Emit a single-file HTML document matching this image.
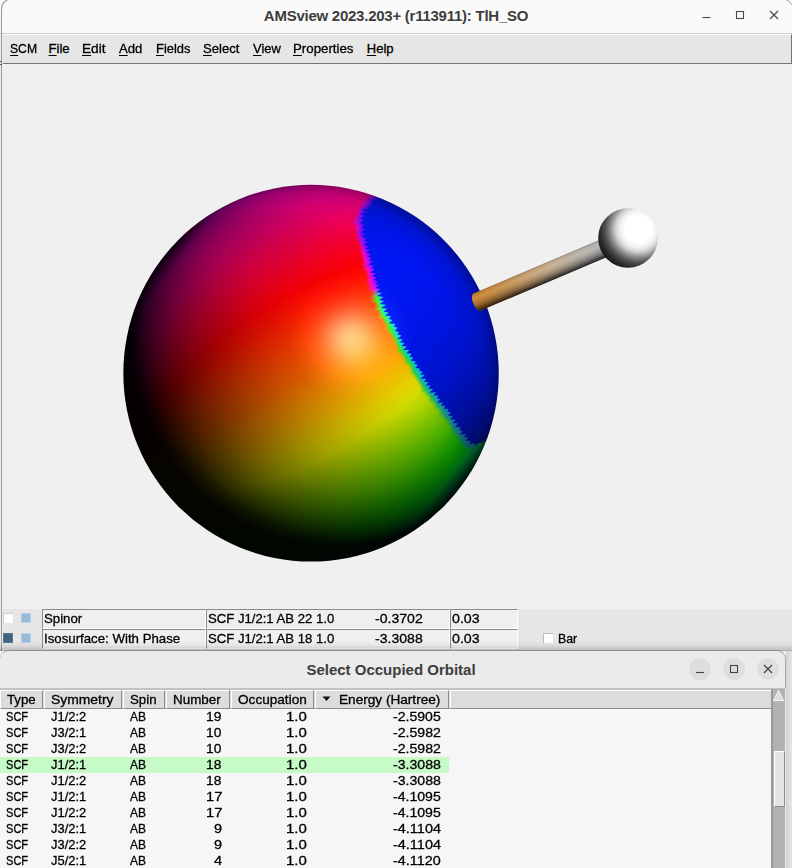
<!DOCTYPE html>
<html>
<head>
<meta charset="utf-8">
<title>AMSview</title>
<style>
html,body{margin:0;padding:0;}
body{width:792px;height:868px;overflow:hidden;position:relative;background:#f0f0f0;font-family:"Liberation Sans",sans-serif;color:#000;}
.abs{position:absolute;}
.t{position:absolute;-webkit-text-stroke:0.3px #000;transform-origin:0 0;white-space:nowrap;line-height:16px;height:16px;font-size:13px;color:#000;}
.r{text-align:right;}
/* main window */
#win{left:0;top:0;width:792px;height:651px;background:#f0f0f0;}
#titlebar{left:0;top:0;width:792px;height:33px;background:#fafafa;border-bottom:1px solid #cfcfcf;}
#title{left:0;top:6px;width:792px;text-align:center;font-weight:bold;font-size:15px;line-height:20px;color:#3d3d3d;letter-spacing:-0.25px;}
#menubar{left:3px;top:34px;width:789px;height:30px;background:#e6e6e6;border-top:1px solid #fbfbfb;border-bottom:1px solid #747474;border-right:1px solid #747474;box-sizing:border-box;}
.m{position:absolute;-webkit-text-stroke:0.3px #000;transform-origin:0 0;top:41px;font-size:13px;line-height:16px;color:#000;white-space:nowrap;}
.m u{text-decoration:underline;text-underline-offset:1.5px;text-decoration-thickness:1px;}
#panel{left:3px;top:609px;width:789px;height:40px;background:#e6e6e6;}
.entry{position:absolute;height:18px;background:#efefef;border-top:1px solid #8a8a8a;border-left:1px solid #8a8a8a;border-bottom:1px solid #fff;border-right:1px solid #fff;box-sizing:content-box;}
.cb{position:absolute;width:9px;height:9px;}
/* dialog */
#dlgsh{left:0;top:641px;width:792px;height:10px;background:linear-gradient(180deg,rgba(0,0,0,0),rgba(0,0,0,0.04) 40%,rgba(0,0,0,0.12) 75%,rgba(0,0,0,0.3));}
#dlg{left:0;top:650px;width:786px;height:218px;background:#ebebeb;border-top-left-radius:9px;border-top-right-radius:9px;border-top:1px solid #8e8e8e;border-right:1px solid #a8a8a8;box-sizing:border-box;}
#dtitle{left:0;top:660px;width:782px;text-align:center;font-weight:bold;font-size:15px;line-height:20px;color:#3d3d3d;}
.wb{position:absolute;width:22px;height:22px;border-radius:11px;background:#dedede;top:658px;}
.hc{position:absolute;top:690px;height:17px;background:#dcdcdc;border-top:1px solid #fff;border-left:1px solid #fff;border-right:1px solid #8c8c8c;border-bottom:1px solid #8c8c8c;box-sizing:content-box;}
</style>
</head>
<body>
<div id="win" class="abs"></div>
<div id="titlebar" class="abs"></div>
<div id="title" class="abs">AMSview 2023.203+ (r113911): TlH_SO</div>
<div id="menubar" class="abs"></div>
<svg class="abs" style="left:692px;top:0" width="100" height="33" viewBox="0 0 100 33">
<path d="M10.5 17.5h8" stroke="#4a4a4a" stroke-width="1.1" fill="none"/>
<rect x="44.5" y="11.5" width="7" height="7" stroke="#4a4a4a" stroke-width="1.1" fill="none"/>
<path d="M78 11l8 8M86 11l-8 8" stroke="#4a4a4a" stroke-width="1.2" fill="none"/>
</svg>
<svg class="abs" style="left:0;top:0" width="792" height="652" viewBox="0 0 792 652"><path d="M1.5 651V9Q1.8 2.2 7.5 0" stroke="#9c9c9c" stroke-width="1.1" fill="none"/><path d="M786.5 0Q790.6 1 791.5 5" stroke="#a8a8a8" stroke-width="1" fill="none"/><path d="M0 61.5H2M0 64.5H2" stroke="#555" stroke-width="1" fill="none"/></svg>
<div class="m" style="left:9.7px;transform:scaleX(0.936);"><u>S</u>CM</div>
<div class="m" style="left:48.6px;"><u>F</u>ile</div>
<div class="m" style="left:81.8px;transform:scaleX(1.052);"><u>E</u>dit</div>
<div class="m" style="left:118.9px;transform:scaleX(1.009);"><u>A</u>dd</div>
<div class="m" style="left:155.6px;transform:scaleX(0.992);"><u>F</u>ields</div>
<div class="m" style="left:202.6px;transform:scaleX(1.008);"><u>S</u>elect</div>
<div class="m" style="left:252.7px;transform:scaleX(0.995);"><u>V</u>iew</div>
<div class="m" style="left:293.4px;transform:scaleX(1.021);"><u>P</u>roperties</div>
<div class="m" style="left:366.8px;"><u>H</u>elp</div>
<svg class="abs" style="left:0;top:64px" width="792" height="545" viewBox="0 64 792 545">
<defs>
<clipPath id="sph"><ellipse cx="311.05" cy="373.2" rx="187.70000000000002" ry="188.4"/></clipPath>
<linearGradient id="hg" x1="0" y1="0" x2="0" y2="1"><stop offset="0.100" stop-color="#ff00e4"/><stop offset="0.133" stop-color="#ff00a5"/><stop offset="0.167" stop-color="#ff008a"/><stop offset="0.200" stop-color="#ff0070"/><stop offset="0.233" stop-color="#ff0052"/><stop offset="0.267" stop-color="#ff0036"/><stop offset="0.300" stop-color="#ff001d"/><stop offset="0.333" stop-color="#ff0005"/><stop offset="0.367" stop-color="#ff1300"/><stop offset="0.400" stop-color="#ff2900"/><stop offset="0.433" stop-color="#ff3f00"/><stop offset="0.467" stop-color="#ff5500"/><stop offset="0.500" stop-color="#ff6a00"/><stop offset="0.533" stop-color="#ff8900"/><stop offset="0.567" stop-color="#ffa700"/><stop offset="0.600" stop-color="#ffc600"/><stop offset="0.633" stop-color="#ffe500"/><stop offset="0.667" stop-color="#f7ff00"/><stop offset="0.700" stop-color="#d3ff00"/><stop offset="0.733" stop-color="#acff00"/><stop offset="0.767" stop-color="#83ff00"/><stop offset="0.800" stop-color="#55ff00"/><stop offset="0.833" stop-color="#20ff00"/><stop offset="0.867" stop-color="#00ff11"/><stop offset="0.900" stop-color="#00ff7c"/></linearGradient>
<linearGradient id="lg" x1="0" y1="0" x2="1" y2="0"><stop offset="0.000" stop-color="#000000"/><stop offset="0.036" stop-color="#000000"/><stop offset="0.071" stop-color="#000000"/><stop offset="0.107" stop-color="#131313"/><stop offset="0.143" stop-color="#303030"/><stop offset="0.179" stop-color="#4a4a4a"/><stop offset="0.214" stop-color="#616161"/><stop offset="0.250" stop-color="#767676"/><stop offset="0.286" stop-color="#898989"/><stop offset="0.321" stop-color="#9b9b9b"/><stop offset="0.357" stop-color="#ababab"/><stop offset="0.393" stop-color="#bababa"/><stop offset="0.429" stop-color="#c8c8c8"/><stop offset="0.464" stop-color="#d4d4d4"/><stop offset="0.500" stop-color="#e0e0e0"/><stop offset="0.536" stop-color="#eaeaea"/><stop offset="0.571" stop-color="#f3f3f3"/><stop offset="0.607" stop-color="#fbfbfb"/><stop offset="0.643" stop-color="#ffffff"/><stop offset="0.679" stop-color="#ffffff"/><stop offset="0.714" stop-color="#ffffff"/><stop offset="0.750" stop-color="#ffffff"/><stop offset="0.786" stop-color="#ffffff"/><stop offset="0.821" stop-color="#ffffff"/><stop offset="0.857" stop-color="#ffffff"/><stop offset="0.893" stop-color="#ffffff"/><stop offset="0.929" stop-color="#f5f5f5"/><stop offset="0.964" stop-color="#e0e0e0"/><stop offset="1.000" stop-color="#989898"/></linearGradient>
<linearGradient id="cg" gradientUnits="userSpaceOnUse" x1="0" y1="-188.4" x2="0" y2="188.4"><stop offset="0.000" stop-color="#000" stop-opacity="1.000"/><stop offset="0.042" stop-color="#000" stop-opacity="0.600"/><stop offset="0.083" stop-color="#000" stop-opacity="0.447"/><stop offset="0.125" stop-color="#000" stop-opacity="0.339"/><stop offset="0.167" stop-color="#000" stop-opacity="0.255"/><stop offset="0.208" stop-color="#000" stop-opacity="0.188"/><stop offset="0.250" stop-color="#000" stop-opacity="0.134"/><stop offset="0.292" stop-color="#000" stop-opacity="0.091"/><stop offset="0.333" stop-color="#000" stop-opacity="0.057"/><stop offset="0.375" stop-color="#000" stop-opacity="0.032"/><stop offset="0.417" stop-color="#000" stop-opacity="0.014"/><stop offset="0.458" stop-color="#000" stop-opacity="0.003"/><stop offset="0.500" stop-color="#000" stop-opacity="0.000"/><stop offset="0.542" stop-color="#000" stop-opacity="0.003"/><stop offset="0.583" stop-color="#000" stop-opacity="0.014"/><stop offset="0.625" stop-color="#000" stop-opacity="0.032"/><stop offset="0.667" stop-color="#000" stop-opacity="0.057"/><stop offset="0.708" stop-color="#000" stop-opacity="0.091"/><stop offset="0.750" stop-color="#000" stop-opacity="0.134"/><stop offset="0.792" stop-color="#000" stop-opacity="0.188"/><stop offset="0.833" stop-color="#000" stop-opacity="0.255"/><stop offset="0.875" stop-color="#000" stop-opacity="0.339"/><stop offset="0.917" stop-color="#000" stop-opacity="0.447"/><stop offset="0.958" stop-color="#000" stop-opacity="0.600"/><stop offset="1.000" stop-color="#000" stop-opacity="1.000"/></linearGradient>
<radialGradient id="sp" gradientUnits="userSpaceOnUse" cx="350.5" cy="337.5" r="62.0">
<stop offset="0.000" stop-color="#ffd8fa" stop-opacity="0.520"/>
<stop offset="0.062" stop-color="#ffd8fa" stop-opacity="0.511"/>
<stop offset="0.125" stop-color="#ffd8fa" stop-opacity="0.485"/>
<stop offset="0.188" stop-color="#ffd8fa" stop-opacity="0.444"/>
<stop offset="0.250" stop-color="#ffd8fa" stop-opacity="0.393"/>
<stop offset="0.312" stop-color="#ffd8fa" stop-opacity="0.335"/>
<stop offset="0.375" stop-color="#ffd8fa" stop-opacity="0.276"/>
<stop offset="0.438" stop-color="#ffd8fa" stop-opacity="0.219"/>
<stop offset="0.500" stop-color="#ffd8fa" stop-opacity="0.168"/>
<stop offset="0.562" stop-color="#ffd8fa" stop-opacity="0.124"/>
<stop offset="0.625" stop-color="#ffd8fa" stop-opacity="0.089"/>
<stop offset="0.688" stop-color="#ffd8fa" stop-opacity="0.061"/>
<stop offset="0.750" stop-color="#ffd8fa" stop-opacity="0.040"/>
<stop offset="0.812" stop-color="#ffd8fa" stop-opacity="0.026"/>
<stop offset="0.875" stop-color="#ffd8fa" stop-opacity="0.016"/>
<stop offset="0.938" stop-color="#ffd8fa" stop-opacity="0.009"/>
<stop offset="1.000" stop-color="#ffd8fa" stop-opacity="0.000"/>
</radialGradient>
<linearGradient id="fr" gradientUnits="userSpaceOnUse" x1="370" y1="200" x2="470" y2="440"><stop offset="0" stop-color="#b010e0"/><stop offset="0.2" stop-color="#f010e0"/><stop offset="0.325" stop-color="#ff10c0"/><stop offset="0.355" stop-color="#40f010"/><stop offset="0.6" stop-color="#20f020"/><stop offset="0.8" stop-color="#20e070"/><stop offset="1" stop-color="#20c0c0"/></linearGradient>
<linearGradient id="fr2" gradientUnits="userSpaceOnUse" x1="370" y1="200" x2="470" y2="440"><stop offset="0" stop-color="#5010ff"/><stop offset="0.2" stop-color="#8010ff"/><stop offset="0.325" stop-color="#b010ff"/><stop offset="0.355" stop-color="#10e0c0"/><stop offset="0.7" stop-color="#10d0e0"/><stop offset="1" stop-color="#20a0f0"/></linearGradient>
<linearGradient id="bl" gradientUnits="userSpaceOnUse" x1="477" y1="0" x2="606" y2="0"><stop offset="0" stop-color="#c98432"/><stop offset="0.3" stop-color="#c8965a"/><stop offset="0.6" stop-color="#c9ae8e"/><stop offset="0.85" stop-color="#bcb4aa"/><stop offset="1" stop-color="#b8b6b4"/></linearGradient>
<linearGradient id="bs" x1="0" y1="0" x2="0" y2="1"><stop offset="0" stop-color="#000" stop-opacity="0.22"/><stop offset="0.1" stop-color="#000" stop-opacity="0.04"/><stop offset="0.25" stop-color="#fff" stop-opacity="0.06"/><stop offset="0.45" stop-color="#000" stop-opacity="0.05"/><stop offset="0.7" stop-color="#000" stop-opacity="0.3"/><stop offset="0.88" stop-color="#000" stop-opacity="0.6"/><stop offset="1" stop-color="#000" stop-opacity="0.82"/></linearGradient>
<radialGradient id="hs" gradientUnits="userSpaceOnUse" cx="638.5" cy="229" r="44"><stop offset="0" stop-color="#fff"/><stop offset="0.30" stop-color="#fff"/><stop offset="0.42" stop-color="#f0f0f0"/><stop offset="0.52" stop-color="#d0d0d0"/><stop offset="0.64" stop-color="#8c8c8c"/><stop offset="0.76" stop-color="#505050"/><stop offset="0.88" stop-color="#2a2a2a"/><stop offset="1" stop-color="#161616"/></radialGradient>
</defs>
<g clip-path="url(#sph)">
<g transform="translate(311.05 373.2) rotate(-24.3) skewY(-5.7)">
<g fill="url(#hg)"><rect x="-190" y="-23.1" width="4" height="46.2"/><rect x="-188" y="-41.3" width="4" height="82.7"/><rect x="-186" y="-53.6" width="4" height="107.2"/><rect x="-184" y="-63.4" width="4" height="126.8"/><rect x="-182" y="-71.8" width="4" height="143.6"/><rect x="-180" y="-79.3" width="4" height="158.5"/><rect x="-178" y="-86.0" width="4" height="172.0"/><rect x="-176" y="-92.2" width="4" height="184.3"/><rect x="-174" y="-97.9" width="4" height="195.8"/><rect x="-172" y="-103.2" width="4" height="206.5"/><rect x="-170" y="-108.3" width="4" height="216.5"/><rect x="-168" y="-113.0" width="4" height="226.0"/><rect x="-166" y="-117.5" width="4" height="235.0"/><rect x="-164" y="-121.8" width="4" height="243.6"/><rect x="-162" y="-125.9" width="4" height="251.8"/><rect x="-160" y="-129.8" width="4" height="259.6"/><rect x="-158" y="-133.5" width="4" height="267.1"/><rect x="-156" y="-137.1" width="4" height="274.3"/><rect x="-154" y="-140.6" width="4" height="281.2"/><rect x="-152" y="-143.9" width="4" height="287.9"/><rect x="-150" y="-147.2" width="4" height="294.3"/><rect x="-148" y="-150.3" width="4" height="300.6"/><rect x="-146" y="-153.3" width="4" height="306.6"/><rect x="-144" y="-156.2" width="4" height="312.4"/><rect x="-142" y="-159.0" width="4" height="318.0"/><rect x="-140" y="-161.7" width="4" height="323.5"/><rect x="-138" y="-164.4" width="4" height="328.8"/><rect x="-136" y="-166.9" width="4" height="333.9"/><rect x="-134" y="-169.4" width="4" height="338.9"/><rect x="-132" y="-171.9" width="4" height="343.7"/><rect x="-130" y="-174.2" width="4" height="348.4"/><rect x="-128" y="-176.5" width="4" height="353.0"/><rect x="-126" y="-178.7" width="4" height="357.4"/><rect x="-124" y="-180.9" width="4" height="361.7"/><rect x="-122" y="-182.9" width="4" height="365.9"/><rect x="-120" y="-185.0" width="4" height="370.0"/><rect x="-118" y="-187.0" width="4" height="373.9"/><rect x="-116" y="-188.9" width="4" height="377.8"/><rect x="-114" y="-190.8" width="4" height="381.6"/><rect x="-112" y="-192.6" width="4" height="385.2"/><rect x="-110" y="-194.4" width="4" height="388.8"/><rect x="-108" y="-196.1" width="4" height="392.2"/><rect x="-106" y="-197.8" width="4" height="395.6"/><rect x="-104" y="-199.4" width="4" height="398.8"/><rect x="-102" y="-201.0" width="4" height="402.0"/><rect x="-100" y="-202.6" width="4" height="405.1"/><rect x="-98" y="-204.1" width="4" height="408.1"/><rect x="-96" y="-205.5" width="4" height="411.1"/><rect x="-94" y="-207.0" width="4" height="413.9"/><rect x="-92" y="-208.3" width="4" height="416.7"/><rect x="-90" y="-209.7" width="4" height="419.4"/><rect x="-88" y="-211.0" width="4" height="422.0"/><rect x="-86" y="-212.3" width="4" height="424.5"/><rect x="-84" y="-213.5" width="4" height="427.0"/><rect x="-82" y="-214.7" width="4" height="429.4"/><rect x="-80" y="-215.9" width="4" height="431.7"/><rect x="-78" y="-217.0" width="4" height="434.0"/><rect x="-76" y="-218.1" width="4" height="436.2"/><rect x="-74" y="-219.1" width="4" height="438.3"/><rect x="-72" y="-220.2" width="4" height="440.3"/><rect x="-70" y="-221.2" width="4" height="442.3"/><rect x="-68" y="-222.1" width="4" height="444.2"/><rect x="-66" y="-223.0" width="4" height="446.1"/><rect x="-64" y="-223.9" width="4" height="447.9"/><rect x="-62" y="-224.8" width="4" height="449.6"/><rect x="-60" y="-225.6" width="4" height="451.3"/><rect x="-58" y="-226.4" width="4" height="452.9"/><rect x="-56" y="-227.2" width="4" height="454.4"/><rect x="-54" y="-227.9" width="4" height="455.9"/><rect x="-52" y="-228.7" width="4" height="457.3"/><rect x="-50" y="-229.3" width="4" height="458.7"/><rect x="-48" y="-230.0" width="4" height="460.0"/><rect x="-46" y="-230.6" width="4" height="461.2"/><rect x="-44" y="-231.2" width="4" height="462.4"/><rect x="-42" y="-231.8" width="4" height="463.6"/><rect x="-40" y="-232.3" width="4" height="464.6"/><rect x="-38" y="-232.8" width="4" height="465.7"/><rect x="-36" y="-233.3" width="4" height="466.6"/><rect x="-34" y="-233.8" width="4" height="467.5"/><rect x="-32" y="-234.2" width="4" height="468.4"/><rect x="-30" y="-234.6" width="4" height="469.2"/><rect x="-28" y="-235.0" width="4" height="469.9"/><rect x="-26" y="-235.3" width="4" height="470.6"/><rect x="-24" y="-235.6" width="4" height="471.3"/><rect x="-22" y="-235.9" width="4" height="471.8"/><rect x="-20" y="-236.2" width="4" height="472.4"/><rect x="-18" y="-236.4" width="4" height="472.8"/><rect x="-16" y="-236.6" width="4" height="473.3"/><rect x="-14" y="-236.8" width="4" height="473.6"/><rect x="-12" y="-237.0" width="4" height="474.0"/><rect x="-10" y="-237.1" width="4" height="474.2"/><rect x="-8" y="-237.2" width="4" height="474.4"/><rect x="-6" y="-237.3" width="4" height="474.6"/><rect x="-4" y="-237.3" width="4" height="474.7"/><rect x="-2" y="-237.4" width="4" height="474.7"/><rect x="0" y="-237.4" width="4" height="474.7"/><rect x="2" y="-237.3" width="4" height="474.7"/><rect x="4" y="-237.3" width="4" height="474.6"/><rect x="6" y="-237.2" width="4" height="474.4"/><rect x="8" y="-237.1" width="4" height="474.2"/><rect x="10" y="-237.0" width="4" height="474.0"/><rect x="12" y="-236.8" width="4" height="473.6"/><rect x="14" y="-236.6" width="4" height="473.3"/><rect x="16" y="-236.4" width="4" height="472.8"/><rect x="18" y="-236.2" width="4" height="472.4"/><rect x="20" y="-235.9" width="4" height="471.8"/><rect x="22" y="-235.6" width="4" height="471.3"/><rect x="24" y="-235.3" width="4" height="470.6"/><rect x="26" y="-235.0" width="4" height="469.9"/><rect x="28" y="-234.6" width="4" height="469.2"/><rect x="30" y="-234.2" width="4" height="468.4"/><rect x="32" y="-233.8" width="4" height="467.5"/><rect x="34" y="-233.3" width="4" height="466.6"/><rect x="36" y="-232.8" width="4" height="465.7"/><rect x="38" y="-232.3" width="4" height="464.6"/><rect x="40" y="-231.8" width="4" height="463.6"/><rect x="42" y="-231.2" width="4" height="462.4"/><rect x="44" y="-230.6" width="4" height="461.2"/><rect x="46" y="-230.0" width="4" height="460.0"/><rect x="48" y="-229.3" width="4" height="458.7"/><rect x="50" y="-228.7" width="4" height="457.3"/><rect x="52" y="-227.9" width="4" height="455.9"/><rect x="54" y="-227.2" width="4" height="454.4"/><rect x="56" y="-226.4" width="4" height="452.9"/><rect x="58" y="-225.6" width="4" height="451.3"/><rect x="60" y="-224.8" width="4" height="449.6"/><rect x="62" y="-223.9" width="4" height="447.9"/><rect x="64" y="-223.0" width="4" height="446.1"/><rect x="66" y="-222.1" width="4" height="444.2"/><rect x="68" y="-221.2" width="4" height="442.3"/><rect x="70" y="-220.2" width="4" height="440.3"/><rect x="72" y="-219.1" width="4" height="438.3"/><rect x="74" y="-218.1" width="4" height="436.2"/><rect x="76" y="-217.0" width="4" height="434.0"/><rect x="78" y="-215.9" width="4" height="431.7"/><rect x="80" y="-214.7" width="4" height="429.4"/><rect x="82" y="-213.5" width="4" height="427.0"/><rect x="84" y="-212.3" width="4" height="424.5"/><rect x="86" y="-211.0" width="4" height="422.0"/><rect x="88" y="-209.7" width="4" height="419.4"/><rect x="90" y="-208.3" width="4" height="416.7"/><rect x="92" y="-207.0" width="4" height="413.9"/><rect x="94" y="-205.5" width="4" height="411.1"/><rect x="96" y="-204.1" width="4" height="408.1"/><rect x="98" y="-202.6" width="4" height="405.1"/><rect x="100" y="-201.0" width="4" height="402.0"/><rect x="102" y="-199.4" width="4" height="398.8"/><rect x="104" y="-197.8" width="4" height="395.6"/><rect x="106" y="-196.1" width="4" height="392.2"/><rect x="108" y="-194.4" width="4" height="388.8"/><rect x="110" y="-192.6" width="4" height="385.2"/><rect x="112" y="-190.8" width="4" height="381.6"/><rect x="114" y="-188.9" width="4" height="377.8"/><rect x="116" y="-187.0" width="4" height="373.9"/><rect x="118" y="-185.0" width="4" height="370.0"/><rect x="120" y="-182.9" width="4" height="365.9"/><rect x="122" y="-180.9" width="4" height="361.7"/><rect x="124" y="-178.7" width="4" height="357.4"/><rect x="126" y="-176.5" width="4" height="353.0"/><rect x="128" y="-174.2" width="4" height="348.4"/><rect x="130" y="-171.9" width="4" height="343.7"/><rect x="132" y="-169.4" width="4" height="338.9"/><rect x="134" y="-166.9" width="4" height="333.9"/><rect x="136" y="-164.4" width="4" height="328.8"/><rect x="138" y="-161.7" width="4" height="323.5"/><rect x="140" y="-159.0" width="4" height="318.0"/><rect x="142" y="-156.2" width="4" height="312.4"/><rect x="144" y="-153.3" width="4" height="306.6"/><rect x="146" y="-150.3" width="4" height="300.6"/><rect x="148" y="-147.2" width="4" height="294.3"/><rect x="150" y="-143.9" width="4" height="287.9"/><rect x="152" y="-140.6" width="4" height="281.2"/><rect x="154" y="-137.1" width="4" height="274.3"/><rect x="156" y="-133.5" width="4" height="267.1"/><rect x="158" y="-129.8" width="4" height="259.6"/><rect x="160" y="-125.9" width="4" height="251.8"/><rect x="162" y="-121.8" width="4" height="243.6"/><rect x="164" y="-117.5" width="4" height="235.0"/><rect x="166" y="-113.0" width="4" height="226.0"/><rect x="168" y="-108.3" width="4" height="216.5"/><rect x="170" y="-103.2" width="4" height="206.5"/><rect x="172" y="-97.9" width="4" height="195.8"/><rect x="174" y="-92.2" width="4" height="184.3"/><rect x="176" y="-86.0" width="4" height="172.0"/><rect x="178" y="-79.3" width="4" height="158.5"/><rect x="180" y="-71.8" width="4" height="143.6"/><rect x="182" y="-63.4" width="4" height="126.8"/><rect x="184" y="-53.6" width="4" height="107.2"/><rect x="186" y="-41.3" width="4" height="82.7"/><rect x="188" y="-23.1" width="4" height="46.2"/></g>
</g>
<filter id="fb" x="-5%" y="-5%" width="110%" height="110%"><feGaussianBlur stdDeviation="1.1"/></filter>
<path d="M374.8 191.5 L375.8 194.7 L370.0 193.3 L372.2 197.2 L367.2 196.9 L368.3 200.2 L364.5 200.8 L365.4 203.6 L360.4 203.6 L363.2 206.8 L359.3 207.9 L359.8 210.5 L357.1 212.7 L359.2 215.7 L354.0 217.3 L357.5 220.3 L351.9 222.7 L358.2 225.3 L353.8 228.2 L358.5 230.1 L356.1 232.7 L358.6 234.8 L355.8 237.5 L359.8 239.2 L358.1 241.7 L361.1 243.4 L359.8 245.7 L362.4 247.3 L359.3 249.8 L363.7 251.1 L360.0 253.7 L364.5 255.1 L361.1 257.6 L365.5 259.0 L362.2 261.5 L366.1 262.9 L361.3 265.6 L367.8 266.7 L362.8 269.4 L368.5 270.6 L365.6 273.1 L369.0 274.6 L366.7 277.0 L369.8 278.5 L366.0 281.1 L371.1 282.4 L366.7 285.1 L372.1 286.4 L367.4 289.4 L373.8 290.4 L372.1 292.9 L374.6 294.5 L370.4 297.5 L376.2 298.4 L371.5 301.4 L377.5 302.3 L376.0 304.7 L379.1 306.2 L375.0 309.3 L380.2 310.4 L379.2 313.0 L382.3 314.4 L378.4 317.8 L384.7 318.0 L383.1 320.7 L386.2 321.9 L385.3 324.5 L388.2 326.0 L385.2 329.3 L390.5 330.0 L388.1 333.0 L392.9 333.8 L391.3 336.4 L395.0 337.4 L393.4 340.0 L396.8 341.1 L395.3 343.6 L398.5 344.8 L396.9 347.4 L400.3 348.6 L396.4 352.1 L402.9 352.2 L401.0 355.2 L405.3 355.9 L403.5 358.8 L407.1 359.7 L403.7 363.1 L409.6 363.3 L408.4 366.0 L412.2 366.9 L410.3 369.7 L413.7 370.6 L410.5 373.7 L415.8 374.0 L414.1 376.7 L417.6 377.6 L416.9 379.9 L420.2 380.9 L418.4 383.5 L422.3 384.3 L420.2 387.3 L424.3 388.0 L420.8 391.7 L427.0 391.5 L424.7 394.7 L429.8 394.7 L428.4 397.5 L431.8 398.3 L428.7 401.8 L434.9 401.5 L433.3 404.3 L436.9 405.0 L434.2 408.3 L440.0 408.1 L438.4 411.0 L442.5 411.5 L438.8 415.2 L444.7 415.0 L442.7 417.9 L446.7 418.4 L446.2 420.9 L449.8 421.8 L447.9 424.8 L451.9 425.7 L450.2 428.6 L454.4 429.4 L451.6 432.9 L456.4 433.6 L455.7 436.2 L459.7 436.9 L458.9 439.5 L462.0 440.3 L460.1 443.4 L465.7 443.9 L464.6 448.3 L470.3 446.7 L470.9 450.1 L475.5 447.4 L477.3 438.4 L479.8 439.8 L478.6 437.1 L481.4 438.3 L481.4 436.2 L484.8 436.6 L520 470 L540 150 L385 150 Z" fill="url(#fr)" filter="url(#fb)"/>
<path d="M377.4 193.2 L378.7 196.5 L372.6 195.0 L374.8 198.9 L369.3 198.1 L371.3 201.8 L366.1 201.5 L368.2 204.8 L365.4 205.7 L366.0 208.0 L360.5 208.3 L363.2 211.4 L359.2 213.1 L362.3 216.1 L357.0 217.7 L362.0 220.6 L357.6 222.8 L361.9 225.2 L359.4 227.8 L362.3 229.8 L357.2 232.6 L362.3 234.4 L358.7 237.1 L363.8 238.6 L359.0 241.5 L364.6 242.8 L361.5 245.4 L366.3 246.7 L362.2 249.4 L366.7 250.7 L365.1 253.0 L368.3 254.5 L364.7 257.1 L369.3 258.4 L366.8 260.8 L370.1 262.3 L365.5 265.0 L371.2 266.2 L369.2 268.5 L371.7 270.2 L370.1 272.4 L373.0 274.0 L370.0 276.5 L374.2 277.9 L370.9 280.4 L375.0 281.8 L370.2 284.6 L375.5 285.9 L372.3 288.5 L377.4 289.7 L373.8 292.6 L378.2 293.8 L376.1 296.3 L380.0 297.6 L377.7 300.1 L381.1 301.5 L377.8 304.3 L382.5 305.5 L380.7 308.0 L384.0 309.5 L379.8 312.8 L385.7 313.4 L383.8 316.1 L388.2 317.0 L385.0 320.1 L389.6 320.9 L388.9 323.4 L392.2 324.8 L390.0 327.8 L394.1 328.8 L392.4 331.7 L396.4 332.8 L392.9 335.9 L398.0 336.5 L396.9 338.9 L400.5 340.0 L396.1 343.4 L401.5 343.9 L399.1 346.8 L404.0 347.4 L401.6 350.4 L406.2 351.2 L402.1 354.8 L408.3 354.9 L406.2 357.8 L410.2 358.7 L408.9 361.3 L412.4 362.3 L411.6 364.8 L414.8 366.0 L411.5 369.3 L417.2 369.4 L413.7 372.7 L419.6 372.8 L415.8 376.1 L420.9 376.5 L417.5 379.7 L423.0 379.9 L420.0 383.0 L425.8 383.1 L422.5 386.4 L427.5 386.8 L426.8 389.3 L429.8 390.4 L427.6 393.5 L432.5 393.7 L430.5 396.7 L435.0 397.0 L434.2 399.6 L437.6 400.3 L435.0 403.6 L440.3 403.6 L438.5 406.6 L442.8 407.0 L440.5 410.1 L445.3 410.4 L443.3 413.4 L448.2 413.6 L444.8 417.1 L450.1 417.2 L448.6 420.0 L452.4 420.9 L450.8 423.8 L454.6 424.7 L451.9 428.0 L457.4 428.3 L455.4 431.5 L460.1 432.1 L458.4 435.1 L462.7 435.5 L459.3 439.3 L465.4 438.8 L463.0 442.1 L468.2 442.4 L466.2 447.1 L472.6 444.4 L473.6 446.7 L477.3 445.1 L478.0 439.3 L481.7 442.1 L480.6 439.0 L484.1 440.2 L482.9 437.3 L487.6 438.6 L520 470 L540 150 L385 150 Z" fill="url(#fr2)" filter="url(#fb)"/>
<path d="M380.6 195.2 L381.1 198.1 L376.6 197.6 L377.6 200.7 L372.1 199.8 L373.6 203.0 L370.8 203.8 L371.8 206.4 L367.5 206.6 L368.8 209.2 L362.5 209.0 L366.7 212.3 L361.1 213.5 L365.8 216.5 L360.8 218.1 L364.6 220.8 L359.9 222.8 L365.2 225.1 L361.0 227.6 L365.7 229.5 L361.0 232.2 L365.6 234.0 L361.6 236.7 L367.2 238.1 L364.4 240.7 L367.8 242.3 L363.5 245.1 L369.3 246.3 L365.0 248.9 L370.7 250.1 L366.0 252.8 L371.7 254.0 L368.1 256.5 L372.5 257.9 L368.9 260.5 L373.7 261.8 L368.3 264.6 L373.8 265.8 L372.0 268.1 L374.9 269.7 L370.0 272.4 L376.1 273.6 L372.2 276.2 L376.9 277.5 L373.6 280.0 L378.0 281.4 L375.2 283.8 L379.2 285.3 L375.3 288.0 L380.7 289.1 L376.4 292.0 L382.1 293.0 L377.1 296.1 L383.5 296.9 L379.1 299.9 L384.0 300.9 L379.8 303.9 L386.2 304.7 L381.0 308.0 L387.2 308.7 L383.5 311.8 L388.8 312.5 L385.1 315.7 L391.1 316.1 L388.9 318.9 L392.6 320.0 L389.0 323.4 L395.6 323.7 L393.9 326.6 L397.6 327.8 L394.9 330.9 L399.1 332.0 L397.3 334.6 L401.6 335.5 L397.2 338.9 L402.8 339.3 L400.0 342.3 L404.7 343.0 L401.5 346.0 L406.9 346.6 L402.9 350.0 L409.5 350.0 L406.5 353.3 L411.8 353.7 L409.4 356.7 L413.2 357.6 L410.7 360.7 L415.4 361.3 L414.3 363.9 L418.0 364.8 L415.2 368.0 L420.0 368.5 L419.2 370.8 L422.7 371.7 L420.3 374.6 L424.9 375.1 L420.4 378.7 L426.4 378.8 L424.0 381.7 L428.6 382.2 L425.4 385.4 L430.7 385.6 L428.1 388.8 L433.3 388.9 L429.4 392.7 L435.7 392.3 L433.6 395.4 L438.4 395.6 L436.8 398.5 L440.6 399.1 L436.9 402.8 L443.3 402.4 L440.8 405.6 L445.4 406.0 L443.8 408.8 L448.4 409.1 L447.6 411.7 L450.9 412.5 L448.0 415.8 L453.0 416.1 L450.4 419.3 L455.7 419.7 L452.6 423.1 L458.0 423.5 L454.9 426.9 L460.7 427.2 L459.6 429.9 L462.5 431.2 L460.1 434.4 L466.0 434.1 L464.2 437.1 L468.2 437.5 L465.8 440.8 L470.8 440.8 L469.8 444.2 L474.3 442.7 L475.0 444.9 L479.0 443.0 L479.8 441.9 L483.4 444.0 L482.0 440.3 L486.4 441.9 L485.2 439.0 L490.0 440.4 L520 470 L540 150 L385 150 Z" fill="#0016f2"/>
<g style="mix-blend-mode:multiply;isolation:isolate"><g transform="translate(311.05 373.2) rotate(-51.44)">
<g fill="url(#lg)"><rect y="-190" x="-18.5" height="4" width="36.9"/><rect y="-188" x="-33.1" height="4" width="66.1"/><rect y="-186" x="-42.9" height="4" width="85.7"/><rect y="-184" x="-50.7" height="4" width="101.4"/><rect y="-182" x="-57.5" height="4" width="114.9"/><rect y="-180" x="-63.4" height="4" width="126.8"/><rect y="-178" x="-68.8" height="4" width="137.6"/><rect y="-176" x="-73.7" height="4" width="147.5"/><rect y="-174" x="-78.3" height="4" width="156.6"/><rect y="-172" x="-82.6" height="4" width="165.2"/><rect y="-170" x="-86.6" height="4" width="173.2"/><rect y="-168" x="-90.4" height="4" width="180.8"/><rect y="-166" x="-94.0" height="4" width="188.0"/><rect y="-164" x="-97.4" height="4" width="194.9"/><rect y="-162" x="-100.7" height="4" width="201.4"/><rect y="-160" x="-103.8" height="4" width="207.7"/><rect y="-158" x="-106.8" height="4" width="213.7"/><rect y="-156" x="-109.7" height="4" width="219.4"/><rect y="-154" x="-112.5" height="4" width="225.0"/><rect y="-152" x="-115.2" height="4" width="230.3"/><rect y="-150" x="-117.7" height="4" width="235.5"/><rect y="-148" x="-120.2" height="4" width="240.4"/><rect y="-146" x="-122.6" height="4" width="245.3"/><rect y="-144" x="-125.0" height="4" width="249.9"/><rect y="-142" x="-127.2" height="4" width="254.4"/><rect y="-140" x="-129.4" height="4" width="258.8"/><rect y="-138" x="-131.5" height="4" width="263.0"/><rect y="-136" x="-133.6" height="4" width="267.1"/><rect y="-134" x="-135.5" height="4" width="271.1"/><rect y="-132" x="-137.5" height="4" width="275.0"/><rect y="-130" x="-139.4" height="4" width="278.7"/><rect y="-128" x="-141.2" height="4" width="282.4"/><rect y="-126" x="-143.0" height="4" width="285.9"/><rect y="-124" x="-144.7" height="4" width="289.4"/><rect y="-122" x="-146.4" height="4" width="292.7"/><rect y="-120" x="-148.0" height="4" width="296.0"/><rect y="-118" x="-149.6" height="4" width="299.2"/><rect y="-116" x="-151.1" height="4" width="302.2"/><rect y="-114" x="-152.6" height="4" width="305.2"/><rect y="-112" x="-154.1" height="4" width="308.2"/><rect y="-110" x="-155.5" height="4" width="311.0"/><rect y="-108" x="-156.9" height="4" width="313.8"/><rect y="-106" x="-158.2" height="4" width="316.5"/><rect y="-104" x="-159.5" height="4" width="319.1"/><rect y="-102" x="-160.8" height="4" width="321.6"/><rect y="-100" x="-162.1" height="4" width="324.1"/><rect y="-98" x="-163.3" height="4" width="326.5"/><rect y="-96" x="-164.4" height="4" width="328.9"/><rect y="-94" x="-165.6" height="4" width="331.1"/><rect y="-92" x="-166.7" height="4" width="333.4"/><rect y="-90" x="-167.8" height="4" width="335.5"/><rect y="-88" x="-168.8" height="4" width="337.6"/><rect y="-86" x="-169.8" height="4" width="339.6"/><rect y="-84" x="-170.8" height="4" width="341.6"/><rect y="-82" x="-171.8" height="4" width="343.5"/><rect y="-80" x="-172.7" height="4" width="345.4"/><rect y="-78" x="-173.6" height="4" width="347.2"/><rect y="-76" x="-174.5" height="4" width="348.9"/><rect y="-74" x="-175.3" height="4" width="350.6"/><rect y="-72" x="-176.1" height="4" width="352.3"/><rect y="-70" x="-176.9" height="4" width="353.8"/><rect y="-68" x="-177.7" height="4" width="355.4"/><rect y="-66" x="-178.4" height="4" width="356.9"/><rect y="-64" x="-179.1" height="4" width="358.3"/><rect y="-62" x="-179.8" height="4" width="359.7"/><rect y="-60" x="-180.5" height="4" width="361.0"/><rect y="-58" x="-181.1" height="4" width="362.3"/><rect y="-56" x="-181.8" height="4" width="363.5"/><rect y="-54" x="-182.4" height="4" width="364.7"/><rect y="-52" x="-182.9" height="4" width="365.8"/><rect y="-50" x="-183.5" height="4" width="366.9"/><rect y="-48" x="-184.0" height="4" width="368.0"/><rect y="-46" x="-184.5" height="4" width="369.0"/><rect y="-44" x="-185.0" height="4" width="369.9"/><rect y="-42" x="-185.4" height="4" width="370.8"/><rect y="-40" x="-185.9" height="4" width="371.7"/><rect y="-38" x="-186.3" height="4" width="372.5"/><rect y="-36" x="-186.6" height="4" width="373.3"/><rect y="-34" x="-187.0" height="4" width="374.0"/><rect y="-32" x="-187.4" height="4" width="374.7"/><rect y="-30" x="-187.7" height="4" width="375.3"/><rect y="-28" x="-188.0" height="4" width="375.9"/><rect y="-26" x="-188.2" height="4" width="376.5"/><rect y="-24" x="-188.5" height="4" width="377.0"/><rect y="-22" x="-188.7" height="4" width="377.5"/><rect y="-20" x="-188.9" height="4" width="377.9"/><rect y="-18" x="-189.1" height="4" width="378.3"/><rect y="-16" x="-189.3" height="4" width="378.6"/><rect y="-14" x="-189.5" height="4" width="378.9"/><rect y="-12" x="-189.6" height="4" width="379.2"/><rect y="-10" x="-189.7" height="4" width="379.4"/><rect y="-8" x="-189.8" height="4" width="379.5"/><rect y="-6" x="-189.8" height="4" width="379.7"/><rect y="-4" x="-189.9" height="4" width="379.8"/><rect y="-2" x="-189.9" height="4" width="379.8"/><rect y="0" x="-189.9" height="4" width="379.8"/><rect y="2" x="-189.9" height="4" width="379.8"/><rect y="4" x="-189.8" height="4" width="379.7"/><rect y="6" x="-189.8" height="4" width="379.5"/><rect y="8" x="-189.7" height="4" width="379.4"/><rect y="10" x="-189.6" height="4" width="379.2"/><rect y="12" x="-189.5" height="4" width="378.9"/><rect y="14" x="-189.3" height="4" width="378.6"/><rect y="16" x="-189.1" height="4" width="378.3"/><rect y="18" x="-188.9" height="4" width="377.9"/><rect y="20" x="-188.7" height="4" width="377.5"/><rect y="22" x="-188.5" height="4" width="377.0"/><rect y="24" x="-188.2" height="4" width="376.5"/><rect y="26" x="-188.0" height="4" width="375.9"/><rect y="28" x="-187.7" height="4" width="375.3"/><rect y="30" x="-187.4" height="4" width="374.7"/><rect y="32" x="-187.0" height="4" width="374.0"/><rect y="34" x="-186.6" height="4" width="373.3"/><rect y="36" x="-186.3" height="4" width="372.5"/><rect y="38" x="-185.9" height="4" width="371.7"/><rect y="40" x="-185.4" height="4" width="370.8"/><rect y="42" x="-185.0" height="4" width="369.9"/><rect y="44" x="-184.5" height="4" width="369.0"/><rect y="46" x="-184.0" height="4" width="368.0"/><rect y="48" x="-183.5" height="4" width="366.9"/><rect y="50" x="-182.9" height="4" width="365.8"/><rect y="52" x="-182.4" height="4" width="364.7"/><rect y="54" x="-181.8" height="4" width="363.5"/><rect y="56" x="-181.1" height="4" width="362.3"/><rect y="58" x="-180.5" height="4" width="361.0"/><rect y="60" x="-179.8" height="4" width="359.7"/><rect y="62" x="-179.1" height="4" width="358.3"/><rect y="64" x="-178.4" height="4" width="356.9"/><rect y="66" x="-177.7" height="4" width="355.4"/><rect y="68" x="-176.9" height="4" width="353.8"/><rect y="70" x="-176.1" height="4" width="352.3"/><rect y="72" x="-175.3" height="4" width="350.6"/><rect y="74" x="-174.5" height="4" width="348.9"/><rect y="76" x="-173.6" height="4" width="347.2"/><rect y="78" x="-172.7" height="4" width="345.4"/><rect y="80" x="-171.8" height="4" width="343.5"/><rect y="82" x="-170.8" height="4" width="341.6"/><rect y="84" x="-169.8" height="4" width="339.6"/><rect y="86" x="-168.8" height="4" width="337.6"/><rect y="88" x="-167.8" height="4" width="335.5"/><rect y="90" x="-166.7" height="4" width="333.4"/><rect y="92" x="-165.6" height="4" width="331.1"/><rect y="94" x="-164.4" height="4" width="328.9"/><rect y="96" x="-163.3" height="4" width="326.5"/><rect y="98" x="-162.1" height="4" width="324.1"/><rect y="100" x="-160.8" height="4" width="321.6"/><rect y="102" x="-159.5" height="4" width="319.1"/><rect y="104" x="-158.2" height="4" width="316.5"/><rect y="106" x="-156.9" height="4" width="313.8"/><rect y="108" x="-155.5" height="4" width="311.0"/><rect y="110" x="-154.1" height="4" width="308.2"/><rect y="112" x="-152.6" height="4" width="305.2"/><rect y="114" x="-151.1" height="4" width="302.2"/><rect y="116" x="-149.6" height="4" width="299.2"/><rect y="118" x="-148.0" height="4" width="296.0"/><rect y="120" x="-146.4" height="4" width="292.7"/><rect y="122" x="-144.7" height="4" width="289.4"/><rect y="124" x="-143.0" height="4" width="285.9"/><rect y="126" x="-141.2" height="4" width="282.4"/><rect y="128" x="-139.4" height="4" width="278.7"/><rect y="130" x="-137.5" height="4" width="275.0"/><rect y="132" x="-135.5" height="4" width="271.1"/><rect y="134" x="-133.6" height="4" width="267.1"/><rect y="136" x="-131.5" height="4" width="263.0"/><rect y="138" x="-129.4" height="4" width="258.8"/><rect y="140" x="-127.2" height="4" width="254.4"/><rect y="142" x="-125.0" height="4" width="249.9"/><rect y="144" x="-122.6" height="4" width="245.3"/><rect y="146" x="-120.2" height="4" width="240.4"/><rect y="148" x="-117.7" height="4" width="235.5"/><rect y="150" x="-115.2" height="4" width="230.3"/><rect y="152" x="-112.5" height="4" width="225.0"/><rect y="154" x="-109.7" height="4" width="219.4"/><rect y="156" x="-106.8" height="4" width="213.7"/><rect y="158" x="-103.8" height="4" width="207.7"/><rect y="160" x="-100.7" height="4" width="201.4"/><rect y="162" x="-97.4" height="4" width="194.9"/><rect y="164" x="-94.0" height="4" width="188.0"/><rect y="166" x="-90.4" height="4" width="180.8"/><rect y="168" x="-86.6" height="4" width="173.2"/><rect y="170" x="-82.6" height="4" width="165.2"/><rect y="172" x="-78.3" height="4" width="156.6"/><rect y="174" x="-73.7" height="4" width="147.5"/><rect y="176" x="-68.8" height="4" width="137.6"/><rect y="178" x="-63.4" height="4" width="126.8"/><rect y="180" x="-57.5" height="4" width="114.9"/><rect y="182" x="-50.7" height="4" width="101.4"/><rect y="184" x="-42.9" height="4" width="85.7"/><rect y="186" x="-33.1" height="4" width="66.1"/><rect y="188" x="-18.5" height="4" width="36.9"/></g>
<rect x="-190.4" y="-190.4" width="380.8" height="380.8" fill="url(#cg)"/>
<rect x="-190.4" y="-190.4" width="380.8" height="380.8" fill="#fff" fill-opacity="0.025"/>
</g></g>
<circle cx="350.5" cy="337.5" r="62.0" fill="url(#sp)" style="mix-blend-mode:plus-lighter"/>
</g>
<g transform="rotate(-23.0 477 302)">
<rect x="477" y="292.7" width="136" height="18.6" fill="url(#bl)"/>
<ellipse cx="477" cy="302" rx="4" ry="9.3" fill="#c98432"/>
<path d="M477 292.7H613V311.3H477A4 9.3 0 0 1 477 292.7Z" fill="url(#bs)"/>
</g>
<circle cx="628" cy="238" r="29.8" fill="url(#hs)"/>
</svg>
<div id="panel" class="abs"></div>
<!-- panel rows -->
<div class="cb" style="left:3px;top:613px;background:#fff;border-top:1px solid #cfcfcf;border-left:1px solid #cfcfcf;box-sizing:border-box;width:10px;height:10px;"></div>
<div class="cb" style="left:21px;top:613px;background:#9ab9d9;border:1px solid #b9cde3;box-sizing:border-box;width:10px;height:10px;"></div>
<div class="cb" style="left:3px;top:633px;background:#44607f;border:1px solid #5b7695;box-sizing:border-box;width:10px;height:10px;"></div>
<div class="cb" style="left:21px;top:633px;background:#9ab9d9;border:1px solid #b9cde3;box-sizing:border-box;width:10px;height:10px;"></div>
<div class="entry" style="left:42px;top:609px;width:162px;"></div>
<div class="entry" style="left:206px;top:609px;width:242px;"></div>
<div class="entry" style="left:450px;top:609px;width:66px;"></div>
<div class="entry" style="left:42px;top:629px;width:162px;"></div>
<div class="entry" style="left:206px;top:629px;width:242px;"></div>
<div class="entry" style="left:450px;top:629px;width:66px;"></div>
<div class="cb" style="left:543px;top:633px;background:#fff;border-top:1px solid #bdbdbd;border-left:1px solid #bdbdbd;box-sizing:border-box;width:10px;height:10px;"></div>

<div id="dlgsh" class="abs"></div>
<div id="dlg" class="abs"></div>
<div id="dtitle" class="abs">Select Occupied Orbital</div>
<!-- dialog chrome -->
<div class="wb" style="left:689px;"></div><div class="wb" style="left:723px;"></div><div class="wb" style="left:757px;"></div>
<svg class="abs" style="left:688px;top:657px" width="92" height="24" viewBox="0 0 92 24">
<path d="M8 15.5h8" stroke="#444" stroke-width="1.1" fill="none"/>
<rect x="42.5" y="8.5" width="7" height="7" stroke="#444" stroke-width="1.1" fill="none"/>
<path d="M76 8l8 8M84 8l-8 8" stroke="#444" stroke-width="1.2" fill="none"/>
</svg>
<div class="abs" style="left:0;top:688px;width:786px;height:2px;background:#c2c2c2;"></div>
<div class="abs" style="left:0;top:690px;width:771px;height:178px;background:#f6f6f6;"></div>
<div class="abs" style="left:0;top:690px;width:771px;height:19px;background:#dcdcdc;border-bottom:1px solid #8c8c8c;box-sizing:border-box;"></div>
<div class="hc" style="left:0px;width:41px;"></div>
<div class="hc" style="left:44px;width:76px;"></div>
<div class="hc" style="left:123px;width:40px;"></div>
<div class="hc" style="left:166px;width:62px;"></div>
<div class="hc" style="left:231px;width:81px;"></div>
<div class="hc" style="left:315px;width:132px;"></div>
<div class="hc" style="left:450px;width:320px;border-right:none;"></div>
<svg class="abs" style="left:322px;top:696px" width="10" height="6"><path d="M0.5 0.5h8l-4 4.5z" fill="#111"/></svg>
<div class="abs" style="left:0;top:757px;width:449px;height:16px;background:#c6fac6;"></div>
<!-- scrollbar -->
<div class="abs" style="left:771px;top:689px;width:2px;height:179px;background:#9a9a9a;"></div>
<div class="abs" style="left:773px;top:689px;width:12px;height:179px;background:#b2b2b2;"></div>
<div class="abs" style="left:785px;top:689px;width:1px;height:179px;background:#ececec;"></div>
<svg class="abs" style="left:773px;top:690px" width="11" height="12"><path d="M5.5 0.5L10.5 10.5H0.5z" fill="#dcdcdc" stroke="#fff" stroke-width="0.8"/></svg>
<div class="abs" style="left:774px;top:751px;width:11px;height:56px;background:#e4e4e4;border-top:1px solid #fff;border-left:1px solid #fff;border-right:1px solid #8c8c8c;border-bottom:1px solid #8c8c8c;box-sizing:border-box;"></div>
<div class="abs" style="left:786px;top:651px;width:6px;height:217px;background:linear-gradient(90deg,#d2d2d2,#e6e6e6);"></div>
<div class="t" style="left:44.0px;top:610.8px;transform:scaleX(1.017);">Spinor</div>
<div class="t" style="left:207.9px;top:610.8px;transform:scaleX(1.010);">SCF J1/2:1 AB 22 1.0</div>
<div class="t" style="left:374.9px;top:610.8px;transform:scaleX(1.083);">-0.3702</div>
<div class="t" style="left:452.0px;top:610.8px;transform:scaleX(1.095);">0.03</div>
<div class="t" style="left:43.9px;top:630.5px;transform:scaleX(1.019);">Isosurface: With Phase</div>
<div class="t" style="left:207.9px;top:630.5px;transform:scaleX(1.010);">SCF J1/2:1 AB 18 1.0</div>
<div class="t" style="left:374.9px;top:630.5px;transform:scaleX(1.082);">-3.3088</div>
<div class="t" style="left:452.0px;top:630.5px;transform:scaleX(1.095);">0.03</div>
<div class="t" style="left:558.1px;top:630.5px;transform:scaleX(0.946);">Bar</div>
<div class="t" style="left:6.5px;top:691.7px;transform:scaleX(1.020);">Type</div>
<div class="t" style="left:51.0px;top:691.7px;transform:scaleX(1.068);">Symmetry</div>
<div class="t" style="left:129.8px;top:691.7px;transform:scaleX(1.020);">Spin</div>
<div class="t" style="left:173.1px;top:691.7px;transform:scaleX(1.031);">Number</div>
<div class="t" style="left:237.8px;top:691.7px;transform:scaleX(1.046);">Occupation</div>
<div class="t" style="left:339.2px;top:691.7px;transform:scaleX(1.047);">Energy (Hartree)</div>
<div class="t" style="left:6.3px;top:709.3px;transform:scaleX(0.851);">SCF</div>
<div class="t" style="left:51.2px;top:709.3px;transform:scaleX(0.993);">J1/2:2</div>
<div class="t" style="left:130.0px;top:709.3px;transform:scaleX(0.926);">AB</div>
<div class="t" style="left:205.8px;top:709.3px;transform:scaleX(1.062);">19</div>
<div class="t" style="left:286.0px;top:709.3px;transform:scaleX(1.154);">1.0</div>
<div class="t" style="left:393.0px;top:709.3px;transform:scaleX(1.084);">-2.5905</div>
<div class="t" style="left:6.3px;top:725.3px;transform:scaleX(0.851);">SCF</div>
<div class="t" style="left:51.2px;top:725.3px;transform:scaleX(0.993);">J3/2:1</div>
<div class="t" style="left:130.0px;top:725.3px;transform:scaleX(0.926);">AB</div>
<div class="t" style="left:205.8px;top:725.3px;transform:scaleX(1.060);">10</div>
<div class="t" style="left:286.0px;top:725.3px;transform:scaleX(1.154);">1.0</div>
<div class="t" style="left:393.0px;top:725.3px;transform:scaleX(1.085);">-2.5982</div>
<div class="t" style="left:6.3px;top:741.3px;transform:scaleX(0.851);">SCF</div>
<div class="t" style="left:51.2px;top:741.3px;transform:scaleX(0.993);">J3/2:2</div>
<div class="t" style="left:130.0px;top:741.3px;transform:scaleX(0.926);">AB</div>
<div class="t" style="left:205.8px;top:741.3px;transform:scaleX(1.060);">10</div>
<div class="t" style="left:286.0px;top:741.3px;transform:scaleX(1.154);">1.0</div>
<div class="t" style="left:393.0px;top:741.3px;transform:scaleX(1.085);">-2.5982</div>
<div class="t" style="left:6.3px;top:757.3px;transform:scaleX(0.851);">SCF</div>
<div class="t" style="left:51.2px;top:757.3px;transform:scaleX(0.993);">J1/2:1</div>
<div class="t" style="left:130.0px;top:757.3px;transform:scaleX(0.926);">AB</div>
<div class="t" style="left:205.8px;top:757.3px;transform:scaleX(1.062);">18</div>
<div class="t" style="left:286.0px;top:757.3px;transform:scaleX(1.154);">1.0</div>
<div class="t" style="left:393.0px;top:757.3px;transform:scaleX(1.085);">-3.3088</div>
<div class="t" style="left:6.3px;top:773.3px;transform:scaleX(0.851);">SCF</div>
<div class="t" style="left:51.2px;top:773.3px;transform:scaleX(0.993);">J1/2:2</div>
<div class="t" style="left:130.0px;top:773.3px;transform:scaleX(0.926);">AB</div>
<div class="t" style="left:205.8px;top:773.3px;transform:scaleX(1.062);">18</div>
<div class="t" style="left:286.0px;top:773.3px;transform:scaleX(1.154);">1.0</div>
<div class="t" style="left:393.0px;top:773.3px;transform:scaleX(1.085);">-3.3088</div>
<div class="t" style="left:6.3px;top:789.3px;transform:scaleX(0.851);">SCF</div>
<div class="t" style="left:51.2px;top:789.3px;transform:scaleX(0.993);">J1/2:1</div>
<div class="t" style="left:130.0px;top:789.3px;transform:scaleX(0.926);">AB</div>
<div class="t" style="left:205.7px;top:789.3px;transform:scaleX(1.126);">17</div>
<div class="t" style="left:286.0px;top:789.3px;transform:scaleX(1.154);">1.0</div>
<div class="t" style="left:393.0px;top:789.3px;transform:scaleX(1.084);">-4.1095</div>
<div class="t" style="left:6.3px;top:805.3px;transform:scaleX(0.851);">SCF</div>
<div class="t" style="left:51.2px;top:805.3px;transform:scaleX(0.993);">J1/2:2</div>
<div class="t" style="left:130.0px;top:805.3px;transform:scaleX(0.926);">AB</div>
<div class="t" style="left:205.7px;top:805.3px;transform:scaleX(1.126);">17</div>
<div class="t" style="left:286.0px;top:805.3px;transform:scaleX(1.154);">1.0</div>
<div class="t" style="left:393.0px;top:805.3px;transform:scaleX(1.084);">-4.1095</div>
<div class="t" style="left:6.3px;top:821.3px;transform:scaleX(0.851);">SCF</div>
<div class="t" style="left:51.2px;top:821.3px;transform:scaleX(0.993);">J3/2:1</div>
<div class="t" style="left:130.0px;top:821.3px;transform:scaleX(0.926);">AB</div>
<div class="t" style="left:213.7px;top:821.3px;transform:scaleX(1.113);">9</div>
<div class="t" style="left:286.0px;top:821.3px;transform:scaleX(1.154);">1.0</div>
<div class="t" style="left:393.0px;top:821.3px;transform:scaleX(1.112);">-4.1104</div>
<div class="t" style="left:6.3px;top:837.3px;transform:scaleX(0.851);">SCF</div>
<div class="t" style="left:51.2px;top:837.3px;transform:scaleX(0.993);">J3/2:2</div>
<div class="t" style="left:130.0px;top:837.3px;transform:scaleX(0.926);">AB</div>
<div class="t" style="left:213.7px;top:837.3px;transform:scaleX(1.113);">9</div>
<div class="t" style="left:286.0px;top:837.3px;transform:scaleX(1.154);">1.0</div>
<div class="t" style="left:393.0px;top:837.3px;transform:scaleX(1.112);">-4.1104</div>
<div class="t" style="left:6.3px;top:853.3px;transform:scaleX(0.851);">SCF</div>
<div class="t" style="left:51.2px;top:853.3px;transform:scaleX(0.993);">J5/2:1</div>
<div class="t" style="left:130.0px;top:853.3px;transform:scaleX(0.926);">AB</div>
<div class="t" style="left:213.8px;top:853.3px;transform:scaleX(1.128);">4</div>
<div class="t" style="left:286.0px;top:853.3px;transform:scaleX(1.154);">1.0</div>
<div class="t" style="left:393.0px;top:853.3px;transform:scaleX(1.104);">-4.1120</div>
</body>
</html>
